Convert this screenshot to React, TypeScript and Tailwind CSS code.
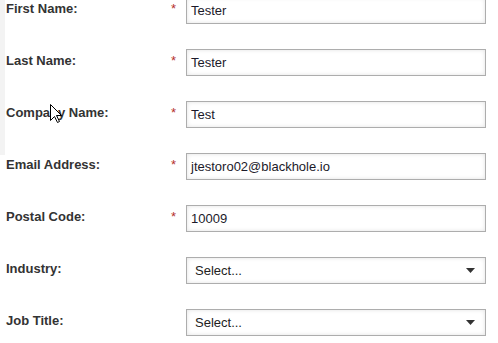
import React from "react";

type Row = { label: string; value?: string; required?: boolean; select?: boolean };

const rows: Row[] = [
  { label: "First Name:", value: "Tester", required: true },
  { label: "Last Name:", value: "Tester", required: true },
  { label: "Company Name:", value: "Test", required: true },
  { label: "Email Address:", value: "jtestoro02@blackhole.io", required: true },
  { label: "Postal Code:", value: "10009", required: true },
  { label: "Industry:", select: true },
  { label: "Job Title:", select: true },
];

function Field({ row }: { row: Row }) {
  return (
    <div className="flex h-[52px] shrink-0 items-start">
      <div className="w-[165px] shrink-0 pt-[4px] text-[13px] font-bold leading-[16px] text-[#333333]">
        {row.label}
      </div>
      <div className="w-[15px] shrink-0 pt-[4px] text-[13px] leading-[16px] text-[#b5302b]">
        {row.required ? "*" : ""}
      </div>
      {row.select ? (
        <div className="flex h-[27px] w-[300px] shrink-0 items-center justify-between border border-[#adadad] bg-white pl-[8px] pr-[10px] text-[13px] leading-[25px] text-[#222222] shadow-[inset_0_0_4px_rgba(0,0,0,0.12)]">
          <span>Select...</span>
          <svg width="9" height="5" viewBox="0 0 9 5">
            <polygon points="0,0 9,0 4.5,5" fill="#333333" />
          </svg>
        </div>
      ) : (
        <div className="h-[27px] w-[300px] shrink-0 border border-[#adadad] bg-white pl-[4px] text-[13px] leading-[25px] text-[#1c1a2a] shadow-[inset_0_0_4px_rgba(0,0,0,0.12)]">
          {row.value}
        </div>
      )}
    </div>
  );
}

export default function App() {
  return (
    <div
      className="relative flex h-[343px] w-[498px] items-start overflow-hidden bg-white"
      style={{ fontFamily: '"Liberation Sans", Arial, sans-serif' }}
    >
      <div className="h-[155px] w-[5px] shrink-0 bg-[#f3f3f3]" />
      <div className="-mt-[3px] flex shrink-0 flex-col pl-[1px]">
        {rows.map((r) => (
          <Field key={r.label} row={r} />
        ))}
      </div>
      <svg
        className="absolute left-[50px] top-[104px]"
        width="13"
        height="20"
        viewBox="0 0 13 20"
      >
        <polygon
          points="0.5,0.5 0.5,16.5 4.5,12.5 7.5,18.5 9.5,17.5 6.5,11.5 11.5,11.5"
          fill="#ffffff"
          stroke="#000000"
          strokeWidth="1"
          strokeLinejoin="miter"
        />
      </svg>
    </div>
  );
}
